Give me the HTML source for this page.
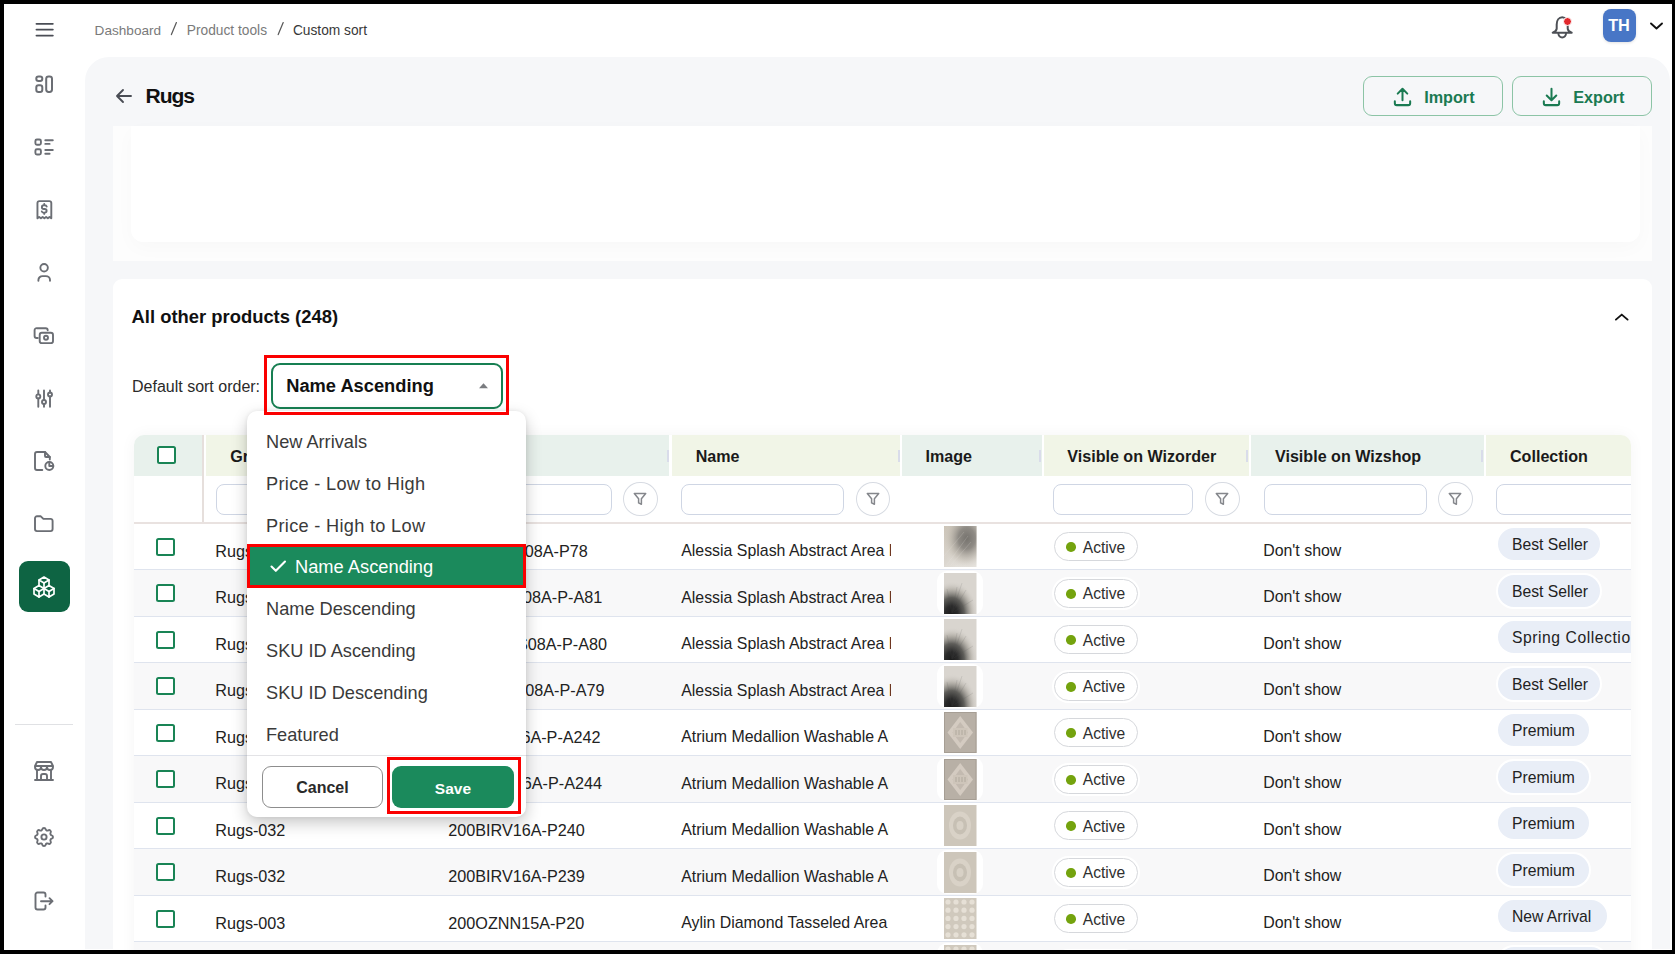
<!DOCTYPE html>
<html><head><meta charset="utf-8"><title>Custom sort</title><style>
*{box-sizing:border-box;margin:0;padding:0}
html,body{width:1675px;height:954px;overflow:hidden;background:#fff}
body{font-family:"Liberation Sans",sans-serif;color:#222;position:relative}
.t{position:absolute;white-space:nowrap;line-height:1}
.s{position:absolute;overflow:visible}
.b{position:absolute}
.frame{position:absolute;background:#000;z-index:100}
</style></head><body>
<div class="b" style="left:85px;top:57px;width:1585px;height:892px;background:#f6f7f9;border-radius:24px 24px 0 0"></div>
<svg class="s" style="left:34px;top:18px;" width="20" height="24" viewBox="0 0 20 24" fill="none" stroke="#4a4d55" stroke-width="1.9" stroke-linecap="round" stroke-linejoin="round"><path d="M2.5 5.85h16.3M2.5 11.6h16.3M2.5 17.6h16.3"/></svg>
<div class="t" style="left:94.6px;top:23.7px;font-size:13.6px;font-weight:400;color:#7a7a7a;">Dashboard</div>
<svg class="s" style="left:168px;top:20px;" width="12" height="17" viewBox="0 0 12 17" fill="none" stroke="#5a5a5a" stroke-width="1.25" stroke-linecap="round" stroke-linejoin="round"><path d="M8.4 2.6L3.4 14.6"/></svg>
<div class="t" style="left:186.8px;top:23.6px;font-size:13.75px;font-weight:400;color:#7a7a7a;">Product tools</div>
<svg class="s" style="left:275px;top:20px;" width="12" height="17" viewBox="0 0 12 17" fill="none" stroke="#5a5a5a" stroke-width="1.25" stroke-linecap="round" stroke-linejoin="round"><path d="M8.2 2.6L3.2 14.6"/></svg>
<div class="t" style="left:292.9px;top:23.6px;font-size:13.75px;font-weight:400;color:#383838;">Custom sort</div>
<svg class="s" style="left:1550px;top:15px;" width="24" height="26" viewBox="0 0 24 26" fill="none" stroke="#4d5056" stroke-width="2" stroke-linecap="round" stroke-linejoin="round"><path d="M12.2 2.3C8.9 2.3 6.7 5.5 6.7 9.5v4c0 2-1.6 3.3-4 4.2h19c-2.4-.9-4-2.2-4-4.2v-4c0-4-2.2-7.2-5.5-7.2z"/><path d="M8.4 18.6a3.8 3.8 0 0 0 7.6 0"/></svg>
<div class="b" style="left:1562.9px;top:17px;width:9px;height:9px;border-radius:50%;background:#e2282c;border:1.6px solid #fff"></div>
<div class="b" style="left:1603px;top:9px;width:32.5px;height:32.5px;border-radius:8px;background:#4876c6;box-shadow:0 1px 3px rgba(0,0,0,.12)"></div>
<div class="t" style="left:1608.3px;top:17.2px;font-size:16.3px;font-weight:700;color:#fff;letter-spacing:-0.3px">TH</div>
<svg class="s" style="left:1648px;top:19px;" width="17" height="13" viewBox="0 0 17 13" fill="none" stroke="#111" stroke-width="1.9" stroke-linecap="round" stroke-linejoin="round"><path d="M3 4.5l5.5 5l5.5-5"/></svg>
<svg class="s" style="left:32px;top:72px;" width="24" height="24" viewBox="0 0 24 24" fill="none" stroke="#6b6e74" stroke-width="2" stroke-linecap="round" stroke-linejoin="round"><rect x="4.3" y="4.4" width="6" height="4.6" rx="2.2"/><rect x="4.3" y="13.2" width="6" height="6.8" rx="2.2"/><rect x="14.2" y="4.4" width="5.8" height="15.6" rx="2.4"/></svg>
<svg class="s" style="left:32px;top:135px;" width="24" height="24" viewBox="0 0 24 24" fill="none" stroke="#6b6e74" stroke-width="1.9" stroke-linecap="round" stroke-linejoin="round"><rect x="3.4" y="4.5" width="5.5" height="5.2" rx="1.5"/><rect x="3.4" y="14.3" width="5.5" height="5.2" rx="1.5"/><path d="M13.3 5.2h7.5M13.3 8.9h4.3M13.3 15h7.5M13.3 18.8h4.3"/></svg>
<svg class="s" style="left:32px;top:198px;" width="24" height="24" viewBox="0 0 24 24" fill="none" stroke="#6b6e74" stroke-width="1.9" stroke-linecap="round" stroke-linejoin="round"><path d="M5.45 20.3V5.1a2 2 0 0 1 2-2h9.85a2 2 0 0 1 2 2v15.2l-1.73-1.4-1.73 1.4-1.73-1.4-1.73 1.4-1.73-1.4-1.73 1.4-1.73-1.4z"/><path d="M14.7 8.5a2 1.7 0 0 0-2-1.2h-.9a1.9 1.85 0 0 0 0 3.7h.9a1.9 1.85 0 0 1 0 3.7h-.9a2 1.7 0 0 1-2-1.2M12.25 6v1.3M12.25 14.7v1.2"/></svg>
<svg class="s" style="left:32px;top:260px;" width="24" height="24" viewBox="0 0 24 24" fill="none" stroke="#6b6e74" stroke-width="1.9" stroke-linecap="round" stroke-linejoin="round"><circle cx="12.1" cy="7.8" r="3.75"/><path d="M6.4 20.7v-.6a4.1 4 0 0 1 4.1-4h3.4a4.1 4 0 0 1 4.1 4v.6"/></svg>
<svg class="s" style="left:32px;top:324px;" width="24" height="24" viewBox="0 0 24 24" fill="none" stroke="#6b6e74" stroke-width="1.9" stroke-linecap="round" stroke-linejoin="round"><path d="M15.7 6.2a2 2 0 0 0-2-2H5a2 2 0 0 0-2.4 2v5.8a2 2 0 0 0 2 2h1.2"/><rect x="7.7" y="8.8" width="13.3" height="10.3" rx="2.2"/><circle cx="14" cy="13.8" r="2"/></svg>
<svg class="s" style="left:32px;top:386px;" width="24" height="24" viewBox="0 0 24 24" fill="none" stroke="#6b6e74" stroke-width="1.9" stroke-linecap="round" stroke-linejoin="round"><path d="M6.3 4.5v3.8M6.3 12.5v8.2M12 4.5v9.4M12 18v2.7M18 4.5v2.2M18 10.5v10.2"/><circle cx="6.3" cy="10.4" r="2"/><circle cx="12" cy="16" r="2"/><circle cx="18" cy="8.5" r="2"/></svg>
<svg class="s" style="left:32px;top:449px;" width="24" height="24" viewBox="0 0 24 24" fill="none" stroke="#6b6e74" stroke-width="1.9" stroke-linecap="round" stroke-linejoin="round"><path d="M10.3 21H5a2 2 0 0 1-2-2V5a2 2 0 0 1 2-2h8l4.8 5v2.6"/><path d="M13 3v4a1 1 0 0 0 1 1h3.8"/><circle cx="17.3" cy="17" r="4"/><path d="M17.3 13v4h4"/></svg>
<svg class="s" style="left:32px;top:511px;" width="24" height="24" viewBox="0 0 24 24" fill="none" stroke="#6b6e74" stroke-width="1.9" stroke-linecap="round" stroke-linejoin="round"><path d="M5 5.3h3.8l2.6 2.6h7.2a2 2 0 0 1 2 2v8.2a2 2 0 0 1-2 2H5a2 2 0 0 1-2-2V7.3a2 2 0 0 1 2-2"/></svg>
<div class="b" style="left:18.7px;top:561px;width:51px;height:51px;border-radius:9px;background:#0e6443"></div>
<svg class="s" style="left:32.3px;top:575px;" width="24" height="24" viewBox="0 0 24 24" fill="none" stroke="#fff" stroke-width="1.7" stroke-linecap="round" stroke-linejoin="round"><path d="M7 16.5l-5-3 5-3 5 3v5.5l-5 3z"/><path d="M2 13.5v5.5l5 3M7 16.5l5-3"/><path d="M17 16.5l-5-3 5-3 5 3v5.5l-5 3z"/><path d="M12 19l5 3M17 16.5l5-3"/><path d="M12 13.5V8L7 5l5-3 5 3v5.5"/><path d="M7 5.03v5.45M12 8l5-3"/></svg>
<div class="b" style="left:15px;top:723.5px;width:58px;height:1.2px;background:#e0e1e4"></div>
<svg class="s" style="left:32px;top:759px;" width="24" height="24" viewBox="0 0 24 24" fill="none" stroke="#6b6e74" stroke-width="1.9" stroke-linecap="round" stroke-linejoin="round"><path d="M3 21h18"/><path d="M3 7v1a3 3 0 0 0 6 0V7m0 1a3 3 0 0 0 6 0V7m0 1a3 3 0 0 0 6 0V7H3l2-4h14l2 4"/><path d="M5 21V10.85M19 21V10.85M9 21v-4a2 2 0 0 1 2-2h2a2 2 0 0 1 2 2v4"/></svg>
<svg class="s" style="left:32px;top:825px;" width="24" height="24" viewBox="0 0 24 24" fill="none" stroke="#6b6e74" stroke-width="1.9" stroke-linecap="round" stroke-linejoin="round"><path d="M10.325 4.317c.426-1.756 2.924-1.756 3.35 0a1.724 1.724 0 0 0 2.573 1.066c1.543-.94 3.31.826 2.37 2.37a1.724 1.724 0 0 0 1.065 2.572c1.756.426 1.756 2.924 0 3.35a1.724 1.724 0 0 0-1.066 2.573c.94 1.543-.826 3.31-2.37 2.37a1.724 1.724 0 0 0-2.572 1.065c-.426 1.756-2.924 1.756-3.35 0a1.724 1.724 0 0 0-2.573-1.066c-1.543.94-3.31-.826-2.37-2.37a1.724 1.724 0 0 0-1.065-2.572c-1.756-.426-1.756-2.924 0-3.35a1.724 1.724 0 0 0 1.066-2.573c-.94-1.543.826-3.31 2.37-2.37c1 .608 2.296.07 2.572-1.065z"/><circle cx="12" cy="12" r="2.6"/></svg>
<svg class="s" style="left:32px;top:889px;" width="24" height="24" viewBox="0 0 24 24" fill="none" stroke="#6b6e74" stroke-width="1.9" stroke-linecap="round" stroke-linejoin="round"><path d="M13.5 7.5v-2a2 2 0 0 0-2-2h-6a2 2 0 0 0-2 2v13a2 2 0 0 0 2 2h6a2 2 0 0 0 2-2v-2"/><path d="M9 12.2h11.5l-3-3M17.5 15.2l3-3"/></svg>
<svg class="s" style="left:112.3px;top:83.7px;" width="24" height="24" viewBox="0 0 24 24" fill="none" stroke="#4a4d55" stroke-width="1.9" stroke-linecap="round" stroke-linejoin="round"><path d="M5 12h14M5 12l6 6M5 12l6-6"/></svg>
<div class="t" style="left:145.6px;top:85.3px;font-size:21.1px;font-weight:700;color:#111;letter-spacing:-1.1px">Rugs</div>
<div class="b" style="left:1363px;top:76px;width:140px;height:40px;border:1.3px solid #8cc4a6;border-radius:9px"></div>
<svg class="s" style="left:1390.5px;top:84.5px;" width="23" height="23" viewBox="0 0 24 24" fill="none" stroke="#1a7a52" stroke-width="2.1" stroke-linecap="round" stroke-linejoin="round"><path d="M4 17v2a2 2 0 0 0 2 2h12a2 2 0 0 0 2-2v-2M7 9l5-5 5 5M12 4v12"/></svg>
<div class="t" style="left:1424.2px;top:89.1px;font-size:16.2px;font-weight:700;color:#1a7a52;">Import</div>
<div class="b" style="left:1512px;top:76px;width:140px;height:40px;border:1.3px solid #8cc4a6;border-radius:9px"></div>
<svg class="s" style="left:1539.5px;top:84.5px;" width="23" height="23" viewBox="0 0 24 24" fill="none" stroke="#1a7a52" stroke-width="2.1" stroke-linecap="round" stroke-linejoin="round"><path d="M4 17v2a2 2 0 0 0 2 2h12a2 2 0 0 0 2-2v-2M7 11l5 5 5-5M12 4v12"/></svg>
<div class="t" style="left:1573.2px;top:89.1px;font-size:16.2px;font-weight:700;color:#1a7a52;">Export</div>
<div class="b" style="left:113px;top:125.5px;width:1539px;height:135px;background:#fdfdfd"></div>
<div class="b" style="left:131px;top:125.5px;width:1509px;height:116px;background:#fff;border-radius:0 0 12px 12px;box-shadow:0 6px 20px rgba(0,0,0,.025)"></div>
<div class="b" style="left:113px;top:279px;width:1539px;height:700px;background:#fff;border-radius:9px"></div>
<div class="t" style="left:131.6px;top:307.8px;font-size:18.4px;font-weight:700;color:#111;">All other products (248)</div>
<svg class="s" style="left:1610px;top:305px;" width="24" height="22" viewBox="0 0 24 22" fill="none" stroke="#111" stroke-width="1.9" stroke-linecap="round" stroke-linejoin="round"><path d="M5.9 14.6l5.85-5 5.85 5"/></svg>
<div class="t" style="left:132.0px;top:378.8px;font-size:16px;font-weight:400;color:#2a2a2a;">Default sort order:</div>
<div class="b" style="left:133.8px;top:435px;width:1496.8px;height:540px;background:#fff;border-radius:10px 10px 0 0;box-shadow:0 0 16px rgba(0,0,0,.045)"></div>
<div class="b" style="left:133.8px;top:435.0px;width:68.4px;height:41.0px;background:#e8f1ec;border-radius:10px 0 0 0"></div>
<div class="b" style="left:206.0px;top:435.0px;width:230.2px;height:41.0px;background:#f1f5e7;border-radius:0"></div>
<div class="t" style="left:230.2px;top:448.4px;font-size:16.1px;font-weight:700;color:#1a1a1a;">Group</div>
<div class="b" style="left:433.8px;top:449.8px;width:2.2px;height:12px;background:#d9dcea"></div>
<div class="b" style="left:438.5px;top:435.0px;width:230.7px;height:41.0px;background:#e8f1ec;border-radius:0"></div>
<div class="t" style="left:462.5px;top:448.4px;font-size:16.1px;font-weight:700;color:#1a1a1a;">SKU ID</div>
<div class="b" style="left:666.8px;top:449.8px;width:2.2px;height:12px;background:#d9dcea"></div>
<div class="b" style="left:671.5px;top:435.0px;width:228.4px;height:41.0px;background:#f1f5e7;border-radius:0"></div>
<div class="t" style="left:695.7px;top:448.4px;font-size:16.1px;font-weight:700;color:#1a1a1a;">Name</div>
<div class="b" style="left:897.5px;top:449.8px;width:2.2px;height:12px;background:#d9dcea"></div>
<div class="b" style="left:902.0px;top:435.0px;width:139.6px;height:41.0px;background:#e8f1ec;border-radius:0"></div>
<div class="t" style="left:925.5px;top:448.4px;font-size:16.1px;font-weight:700;color:#1a1a1a;">Image</div>
<div class="b" style="left:1039.2px;top:449.8px;width:2.2px;height:12px;background:#d9dcea"></div>
<div class="b" style="left:1043.9px;top:435.0px;width:204.7px;height:41.0px;background:#f1f5e7;border-radius:0"></div>
<div class="t" style="left:1067.3px;top:448.4px;font-size:16.1px;font-weight:700;color:#1a1a1a;">Visible on Wizorder</div>
<div class="b" style="left:1246.2px;top:449.8px;width:2.2px;height:12px;background:#d9dcea"></div>
<div class="b" style="left:1251.1px;top:435.0px;width:232.5px;height:41.0px;background:#e8f1ec;border-radius:0"></div>
<div class="t" style="left:1275.0px;top:448.4px;font-size:16.1px;font-weight:700;color:#1a1a1a;">Visible on Wizshop</div>
<div class="b" style="left:1481.2px;top:449.8px;width:2.2px;height:12px;background:#d9dcea"></div>
<div class="b" style="left:1486.2px;top:435.0px;width:144.4px;height:41.0px;background:#f1f5e7;border-radius:0 10px 0 0"></div>
<div class="t" style="left:1510.0px;top:448.4px;font-size:16.1px;font-weight:700;color:#1a1a1a;">Collection</div>
<div class="b" style="left:157.4px;top:446.1px;width:18.3px;height:18.4px;border:2.4px solid #198455;border-radius:2.5px;background:#fff"></div>
<div class="b" style="left:202.3px;top:435px;width:1.8px;height:87.5px;background:#e6dfdc"></div>
<div class="b" style="left:133.8px;top:521.9px;width:1496.8px;height:1.7px;background:#e9e2e0"></div>
<div class="b" style="left:215.6px;top:483.8px;width:164.4px;height:31.2px;border:1.3px solid #cfd6e4;border-radius:8px;background:#fff"></div>
<div class="b" style="left:390.0px;top:481.7px;width:34.6px;height:34.8px;border:1.3px solid #d7dbe2;border-radius:50%;background:#fff"></div>
<svg class="s" style="left:399.3px;top:491.2px;" width="16" height="16" viewBox="0 0 16 16" fill="none" stroke="#85878c" stroke-width="1.5" stroke-linecap="round" stroke-linejoin="round"><path d="M2.3 2.6h11.4l-4.3 5.2v5.4l-2.8-1.3v-4.1z"/></svg>
<div class="b" style="left:448.3px;top:483.8px;width:163.6px;height:31.2px;border:1.3px solid #cfd6e4;border-radius:8px;background:#fff"></div>
<div class="b" style="left:623.0px;top:481.7px;width:34.6px;height:34.8px;border:1.3px solid #d7dbe2;border-radius:50%;background:#fff"></div>
<svg class="s" style="left:632.3px;top:491.2px;" width="16" height="16" viewBox="0 0 16 16" fill="none" stroke="#85878c" stroke-width="1.5" stroke-linecap="round" stroke-linejoin="round"><path d="M2.3 2.6h11.4l-4.3 5.2v5.4l-2.8-1.3v-4.1z"/></svg>
<div class="b" style="left:681.2px;top:483.8px;width:162.8px;height:31.2px;border:1.3px solid #cfd6e4;border-radius:8px;background:#fff"></div>
<div class="b" style="left:855.9px;top:481.7px;width:34.6px;height:34.8px;border:1.3px solid #d7dbe2;border-radius:50%;background:#fff"></div>
<svg class="s" style="left:865.1999999999999px;top:491.2px;" width="16" height="16" viewBox="0 0 16 16" fill="none" stroke="#85878c" stroke-width="1.5" stroke-linecap="round" stroke-linejoin="round"><path d="M2.3 2.6h11.4l-4.3 5.2v5.4l-2.8-1.3v-4.1z"/></svg>
<div class="b" style="left:1053.3px;top:483.8px;width:140.2px;height:31.2px;border:1.3px solid #cfd6e4;border-radius:8px;background:#fff"></div>
<div class="b" style="left:1205.0px;top:481.7px;width:34.6px;height:34.8px;border:1.3px solid #d7dbe2;border-radius:50%;background:#fff"></div>
<svg class="s" style="left:1214.3px;top:491.2px;" width="16" height="16" viewBox="0 0 16 16" fill="none" stroke="#85878c" stroke-width="1.5" stroke-linecap="round" stroke-linejoin="round"><path d="M2.3 2.6h11.4l-4.3 5.2v5.4l-2.8-1.3v-4.1z"/></svg>
<div class="b" style="left:1263.7px;top:483.8px;width:163.0px;height:31.2px;border:1.3px solid #cfd6e4;border-radius:8px;background:#fff"></div>
<div class="b" style="left:1438.0px;top:481.7px;width:34.6px;height:34.8px;border:1.3px solid #d7dbe2;border-radius:50%;background:#fff"></div>
<svg class="s" style="left:1447.3px;top:491.2px;" width="16" height="16" viewBox="0 0 16 16" fill="none" stroke="#85878c" stroke-width="1.5" stroke-linecap="round" stroke-linejoin="round"><path d="M2.3 2.6h11.4l-4.3 5.2v5.4l-2.8-1.3v-4.1z"/></svg>
<div class="b" style="left:1496px;top:483.8px;width:134.6px;height:31.2px;overflow:hidden"><div class="b" style="left:0;top:0;width:160px;height:31.2px;border:1.3px solid #cfd6e4;border-radius:8px;background:#fff"></div></div>
<div class="b" style="left:133.8px;top:523.60px;width:1496.8px;height:46.5px;background:#fff;border-bottom:1.3px solid #dfe4ee"></div>
<div class="b" style="left:156px;top:537.50px;width:18.6px;height:18.4px;border:2.4px solid #198455;border-radius:2.5px;background:#fff"></div>
<div class="t" style="left:215.2px;top:542.7px;font-size:16.2px;font-weight:400;color:#222;">Rugs-021</div>
<div class="t" style="right:1087.3px;top:542.7px;font-size:16.2px">200ALSS08A-P78</div>
<div class="b" style="left:681.2px;top:523.60px;width:210px;height:46.5px;overflow:hidden"><div class="t" style="left:0.0px;top:19.7px;font-size:15.9px;font-weight:400;color:#222;">Alessia Splash Abstract Area Rug</div>
</div>
<div class="b" style="left:944px;top:526.20px;width:32.5px;height:41.5px;overflow:hidden"><svg width="32.5" height="41" viewBox="0 0 32.5 41" style="display:block"><defs><radialGradient id="g0" cx="0.7" cy="0.3" r="0.75"><stop offset="0" stop-color="#76736e"/><stop offset="0.35" stop-color="#8f8b85"/><stop offset="0.7" stop-color="#bdb7ad" stop-opacity=".6"/><stop offset="1" stop-color="#d9d4cb" stop-opacity="0"/></radialGradient><linearGradient id="h0" x1="0" y1="0" x2="0.6" y2="1"><stop offset="0" stop-color="#cbc3b6"/><stop offset="0.6" stop-color="#d9d4cc"/><stop offset="1" stop-color="#e6e3de"/></linearGradient></defs><rect width="32.5" height="41" fill="url(#h0)"/><rect width="32.5" height="41" fill="url(#g0)"/><path d="M2 40L24 10M6 40L27 16M0 30L20 6" stroke="#eeebe5" stroke-width="0.6" opacity=".3"/></svg></div>
<div class="b" style="left:1053.6px;top:532.40px;width:84.5px;height:29px;border:1.3px solid #d6d8dc;border-radius:15px;background:#fff"></div>
<div class="b" style="left:1066px;top:542.40px;width:9.7px;height:9.7px;border-radius:50%;background:#74a30e"></div>
<div class="t" style="left:1082.8px;top:539.6px;font-size:15.6px;font-weight:400;color:#2f2f2f;">Active</div>
<div class="t" style="left:1263.2px;top:542.5px;font-size:15.9px;font-weight:400;color:#222;">Don't show</div>
<div class="b" style="left:1496px;top:525.20px;width:134.6px;height:39px;overflow:hidden"><div class="b" style="left:2px;top:3px;width:102.3px;height:32.2px;border-radius:16px;background:#e9eef7"></div></div>
<div class="b" style="left:1498px;top:523.60px;width:132.6px;height:46.5px;overflow:hidden"><div class="t" style="left:14.0px;top:13.6px;font-size:15.7px;font-weight:400;color:#222;">Best Seller</div>
</div>
<div class="b" style="left:133.8px;top:570.10px;width:1496.8px;height:46.5px;background:#f8f8f9;border-bottom:1.3px solid #dfe4ee"></div>
<div class="b" style="left:156px;top:584.00px;width:18.6px;height:18.4px;border:2.4px solid #198455;border-radius:2.5px;background:#fff"></div>
<div class="t" style="left:215.2px;top:589.2px;font-size:16.2px;font-weight:400;color:#222;">Rugs-021</div>
<div class="t" style="right:1072.8px;top:589.2px;font-size:16.2px">200ALSS08A-P-A81</div>
<div class="b" style="left:681.2px;top:570.10px;width:210px;height:46.5px;overflow:hidden"><div class="t" style="left:0.0px;top:19.7px;font-size:15.9px;font-weight:400;color:#222;">Alessia Splash Abstract Area Rug</div>
</div>
<div class="b" style="left:937px;top:571.10px;width:46px;height:43.5px;background:#fff;border-radius:10px"></div>
<div class="b" style="left:944px;top:572.70px;width:32.5px;height:41.5px;overflow:hidden"><svg width="32.5" height="41" viewBox="0 0 32.5 41" style="display:block"><defs><radialGradient id="g1" cx="0.25" cy="0.98" r="0.78" fx="0.22" fy="1"><stop offset="0" stop-color="#1c1c1c"/><stop offset="0.25" stop-color="#2b2b2b"/><stop offset="0.5" stop-color="#5f5e5a"/><stop offset="0.75" stop-color="#aba79f" stop-opacity=".7"/><stop offset="1" stop-color="#d6d2cc" stop-opacity="0"/></radialGradient></defs><rect width="32.5" height="41" fill="#d9d5cf"/><rect width="32.5" height="41" fill="url(#g1)"/><path d="M8 40L13 14M8 40L22 17M8 40L3 16M8 40L29 27M8 40L18 10" stroke="#555" stroke-width="0.6" opacity=".22"/></svg></div>
<div class="b" style="left:1053.6px;top:578.90px;width:84.5px;height:29px;border:1.3px solid #d6d8dc;border-radius:15px;background:#fff;box-shadow:0 0 0 2px #fff"></div>
<div class="b" style="left:1066px;top:588.90px;width:9.7px;height:9.7px;border-radius:50%;background:#74a30e"></div>
<div class="t" style="left:1082.8px;top:586.1px;font-size:15.6px;font-weight:400;color:#2f2f2f;">Active</div>
<div class="t" style="left:1263.2px;top:589.0px;font-size:15.9px;font-weight:400;color:#222;">Don't show</div>
<div class="b" style="left:1496px;top:571.70px;width:134.6px;height:39px;overflow:hidden"><div class="b" style="left:2px;top:3px;width:102.3px;height:32.2px;border-radius:16px;background:#e9eef7;box-shadow:0 0 0 2px #fff"></div></div>
<div class="b" style="left:1498px;top:570.10px;width:132.6px;height:46.5px;overflow:hidden"><div class="t" style="left:14.0px;top:13.6px;font-size:15.7px;font-weight:400;color:#222;">Best Seller</div>
</div>
<div class="b" style="left:133.8px;top:616.60px;width:1496.8px;height:46.5px;background:#fff;border-bottom:1.3px solid #dfe4ee"></div>
<div class="b" style="left:156px;top:630.50px;width:18.6px;height:18.4px;border:2.4px solid #198455;border-radius:2.5px;background:#fff"></div>
<div class="t" style="left:215.2px;top:635.7px;font-size:16.2px;font-weight:400;color:#222;">Rugs-021</div>
<div class="t" style="right:1068.0px;top:635.7px;font-size:16.2px">200ALSS08A-P-A80</div>
<div class="b" style="left:681.2px;top:616.60px;width:210px;height:46.5px;overflow:hidden"><div class="t" style="left:0.0px;top:19.7px;font-size:15.9px;font-weight:400;color:#222;">Alessia Splash Abstract Area Rug</div>
</div>
<div class="b" style="left:944px;top:619.20px;width:32.5px;height:41.5px;overflow:hidden"><svg width="32.5" height="41" viewBox="0 0 32.5 41" style="display:block"><defs><radialGradient id="g2" cx="0.25" cy="0.98" r="0.78" fx="0.22" fy="1"><stop offset="0" stop-color="#1c1c1c"/><stop offset="0.25" stop-color="#2b2b2b"/><stop offset="0.5" stop-color="#5f5e5a"/><stop offset="0.75" stop-color="#aba79f" stop-opacity=".7"/><stop offset="1" stop-color="#d6d2cc" stop-opacity="0"/></radialGradient></defs><rect width="32.5" height="41" fill="#d9d5cf"/><rect width="32.5" height="41" fill="url(#g2)"/><path d="M8 40L13 14M8 40L22 17M8 40L3 16M8 40L29 27M8 40L18 10" stroke="#555" stroke-width="0.6" opacity=".22"/></svg></div>
<div class="b" style="left:1053.6px;top:625.40px;width:84.5px;height:29px;border:1.3px solid #d6d8dc;border-radius:15px;background:#fff"></div>
<div class="b" style="left:1066px;top:635.40px;width:9.7px;height:9.7px;border-radius:50%;background:#74a30e"></div>
<div class="t" style="left:1082.8px;top:632.6px;font-size:15.6px;font-weight:400;color:#2f2f2f;">Active</div>
<div class="t" style="left:1263.2px;top:635.5px;font-size:15.9px;font-weight:400;color:#222;">Don't show</div>
<div class="b" style="left:1496px;top:618.20px;width:134.6px;height:39px;overflow:hidden"><div class="b" style="left:2px;top:3px;width:150px;height:32.2px;border-radius:16px;background:#e9eef7"></div></div>
<div class="b" style="left:1498px;top:616.60px;width:132.6px;height:46.5px;overflow:hidden"><div class="t" style="left:14.0px;top:13.6px;font-size:15.7px;font-weight:400;color:#222;letter-spacing:0.55px">Spring Collection</div>
</div>
<div class="b" style="left:133.8px;top:663.10px;width:1496.8px;height:46.5px;background:#f8f8f9;border-bottom:1.3px solid #dfe4ee"></div>
<div class="b" style="left:156px;top:677.00px;width:18.6px;height:18.4px;border:2.4px solid #198455;border-radius:2.5px;background:#fff"></div>
<div class="t" style="left:215.2px;top:682.2px;font-size:16.2px;font-weight:400;color:#222;">Rugs-021</div>
<div class="t" style="right:1070.5px;top:682.2px;font-size:16.2px">200ALSS08A-P-A79</div>
<div class="b" style="left:681.2px;top:663.10px;width:210px;height:46.5px;overflow:hidden"><div class="t" style="left:0.0px;top:19.7px;font-size:15.9px;font-weight:400;color:#222;">Alessia Splash Abstract Area Rug</div>
</div>
<div class="b" style="left:937px;top:664.10px;width:46px;height:43.5px;background:#fff;border-radius:10px"></div>
<div class="b" style="left:944px;top:665.70px;width:32.5px;height:41.5px;overflow:hidden"><svg width="32.5" height="41" viewBox="0 0 32.5 41" style="display:block"><defs><radialGradient id="g3" cx="0.25" cy="0.98" r="0.78" fx="0.22" fy="1"><stop offset="0" stop-color="#1c1c1c"/><stop offset="0.25" stop-color="#2b2b2b"/><stop offset="0.5" stop-color="#5f5e5a"/><stop offset="0.75" stop-color="#aba79f" stop-opacity=".7"/><stop offset="1" stop-color="#d6d2cc" stop-opacity="0"/></radialGradient></defs><rect width="32.5" height="41" fill="#d9d5cf"/><rect width="32.5" height="41" fill="url(#g3)"/><path d="M8 40L13 14M8 40L22 17M8 40L3 16M8 40L29 27M8 40L18 10" stroke="#555" stroke-width="0.6" opacity=".22"/></svg></div>
<div class="b" style="left:1053.6px;top:671.90px;width:84.5px;height:29px;border:1.3px solid #d6d8dc;border-radius:15px;background:#fff;box-shadow:0 0 0 2px #fff"></div>
<div class="b" style="left:1066px;top:681.90px;width:9.7px;height:9.7px;border-radius:50%;background:#74a30e"></div>
<div class="t" style="left:1082.8px;top:679.1px;font-size:15.6px;font-weight:400;color:#2f2f2f;">Active</div>
<div class="t" style="left:1263.2px;top:682.0px;font-size:15.9px;font-weight:400;color:#222;">Don't show</div>
<div class="b" style="left:1496px;top:664.70px;width:134.6px;height:39px;overflow:hidden"><div class="b" style="left:2px;top:3px;width:102.3px;height:32.2px;border-radius:16px;background:#e9eef7;box-shadow:0 0 0 2px #fff"></div></div>
<div class="b" style="left:1498px;top:663.10px;width:132.6px;height:46.5px;overflow:hidden"><div class="t" style="left:14.0px;top:13.6px;font-size:15.7px;font-weight:400;color:#222;">Best Seller</div>
</div>
<div class="b" style="left:133.8px;top:709.60px;width:1496.8px;height:46.5px;background:#fff;border-bottom:1.3px solid #dfe4ee"></div>
<div class="b" style="left:156px;top:723.50px;width:18.6px;height:18.4px;border:2.4px solid #198455;border-radius:2.5px;background:#fff"></div>
<div class="t" style="left:215.2px;top:728.7px;font-size:16.2px;font-weight:400;color:#222;">Rugs-032</div>
<div class="t" style="right:1074.4px;top:728.7px;font-size:16.2px">200BIRV16A-P-A242</div>
<div class="b" style="left:681.2px;top:709.60px;width:208px;height:46.5px;overflow:hidden"><div class="t" style="left:0.0px;top:19.7px;font-size:15.9px;font-weight:400;color:#222;">Atrium Medallion Washable Area Rug</div>
</div>
<div class="b" style="left:944px;top:712.20px;width:32.5px;height:41.5px;overflow:hidden"><svg width="32.5" height="41" viewBox="0 0 32.5 41" style="display:block"><rect width="32.5" height="41" fill="#b8b0a6"/><path d="M16.2 4L29 20.5 16.2 37 3.5 20.5z" fill="#d4cbc1"/><path d="M16.2 10L24 20.5 16.2 31 8.5 20.5z" fill="#c3bab0"/><rect x="9" y="16" width="14.5" height="9" fill="#cec5ba"/><path d="M12 18v5M15 18v5M18 18v5M21 18v5" stroke="#aaa298" stroke-width="0.8"/><rect x="0.5" y="0.5" width="31.5" height="40" fill="none" stroke="#a69e94" stroke-width="1"/></svg></div>
<div class="b" style="left:1053.6px;top:718.40px;width:84.5px;height:29px;border:1.3px solid #d6d8dc;border-radius:15px;background:#fff"></div>
<div class="b" style="left:1066px;top:728.40px;width:9.7px;height:9.7px;border-radius:50%;background:#74a30e"></div>
<div class="t" style="left:1082.8px;top:725.6px;font-size:15.6px;font-weight:400;color:#2f2f2f;">Active</div>
<div class="t" style="left:1263.2px;top:728.5px;font-size:15.9px;font-weight:400;color:#222;">Don't show</div>
<div class="b" style="left:1496px;top:711.20px;width:134.6px;height:39px;overflow:hidden"><div class="b" style="left:2px;top:3px;width:90.7px;height:32.2px;border-radius:16px;background:#e9eef7"></div></div>
<div class="b" style="left:1498px;top:709.60px;width:132.6px;height:46.5px;overflow:hidden"><div class="t" style="left:14.0px;top:13.6px;font-size:15.7px;font-weight:400;color:#222;">Premium</div>
</div>
<div class="b" style="left:133.8px;top:756.10px;width:1496.8px;height:46.5px;background:#f8f8f9;border-bottom:1.3px solid #dfe4ee"></div>
<div class="b" style="left:156px;top:770.00px;width:18.6px;height:18.4px;border:2.4px solid #198455;border-radius:2.5px;background:#fff"></div>
<div class="t" style="left:215.2px;top:775.2px;font-size:16.2px;font-weight:400;color:#222;">Rugs-032</div>
<div class="t" style="right:1073.0px;top:775.2px;font-size:16.2px">200BIRV16A-P-A244</div>
<div class="b" style="left:681.2px;top:756.10px;width:208px;height:46.5px;overflow:hidden"><div class="t" style="left:0.0px;top:19.7px;font-size:15.9px;font-weight:400;color:#222;">Atrium Medallion Washable Area Rug</div>
</div>
<div class="b" style="left:937px;top:757.10px;width:46px;height:43.5px;background:#fff;border-radius:10px"></div>
<div class="b" style="left:944px;top:758.70px;width:32.5px;height:41.5px;overflow:hidden"><svg width="32.5" height="41" viewBox="0 0 32.5 41" style="display:block"><rect width="32.5" height="41" fill="#b8b0a6"/><path d="M16.2 4L29 20.5 16.2 37 3.5 20.5z" fill="#d4cbc1"/><path d="M16.2 10L24 20.5 16.2 31 8.5 20.5z" fill="#c3bab0"/><rect x="9" y="16" width="14.5" height="9" fill="#cec5ba"/><path d="M12 18v5M15 18v5M18 18v5M21 18v5" stroke="#aaa298" stroke-width="0.8"/><rect x="0.5" y="0.5" width="31.5" height="40" fill="none" stroke="#a69e94" stroke-width="1"/></svg></div>
<div class="b" style="left:1053.6px;top:764.90px;width:84.5px;height:29px;border:1.3px solid #d6d8dc;border-radius:15px;background:#fff;box-shadow:0 0 0 2px #fff"></div>
<div class="b" style="left:1066px;top:774.90px;width:9.7px;height:9.7px;border-radius:50%;background:#74a30e"></div>
<div class="t" style="left:1082.8px;top:772.1px;font-size:15.6px;font-weight:400;color:#2f2f2f;">Active</div>
<div class="t" style="left:1263.2px;top:775.0px;font-size:15.9px;font-weight:400;color:#222;">Don't show</div>
<div class="b" style="left:1496px;top:757.70px;width:134.6px;height:39px;overflow:hidden"><div class="b" style="left:2px;top:3px;width:90.7px;height:32.2px;border-radius:16px;background:#e9eef7;box-shadow:0 0 0 2px #fff"></div></div>
<div class="b" style="left:1498px;top:756.10px;width:132.6px;height:46.5px;overflow:hidden"><div class="t" style="left:14.0px;top:13.6px;font-size:15.7px;font-weight:400;color:#222;">Premium</div>
</div>
<div class="b" style="left:133.8px;top:802.60px;width:1496.8px;height:46.5px;background:#fff;border-bottom:1.3px solid #dfe4ee"></div>
<div class="b" style="left:156px;top:816.50px;width:18.6px;height:18.4px;border:2.4px solid #198455;border-radius:2.5px;background:#fff"></div>
<div class="t" style="left:215.2px;top:821.7px;font-size:16.2px;font-weight:400;color:#222;">Rugs-032</div>
<div class="t" style="left:448.3px;top:821.7px;font-size:16.2px;font-weight:400;color:#222;">200BIRV16A-P240</div>
<div class="b" style="left:681.2px;top:802.60px;width:208px;height:46.5px;overflow:hidden"><div class="t" style="left:0.0px;top:19.7px;font-size:15.9px;font-weight:400;color:#222;">Atrium Medallion Washable Area Rug</div>
</div>
<div class="b" style="left:944px;top:805.20px;width:32.5px;height:41.5px;overflow:hidden"><svg width="32.5" height="41" viewBox="0 0 32.5 41" style="display:block"><rect width="32.5" height="41" fill="#cdc6ba"/><ellipse cx="16" cy="20.5" rx="11" ry="14" fill="#d9d2c7"/><ellipse cx="16" cy="20.5" rx="7" ry="9" fill="#c7c0b4"/><ellipse cx="16" cy="20.5" rx="3.5" ry="4.5" fill="#d8d1c6"/></svg></div>
<div class="b" style="left:1053.6px;top:811.40px;width:84.5px;height:29px;border:1.3px solid #d6d8dc;border-radius:15px;background:#fff"></div>
<div class="b" style="left:1066px;top:821.40px;width:9.7px;height:9.7px;border-radius:50%;background:#74a30e"></div>
<div class="t" style="left:1082.8px;top:818.6px;font-size:15.6px;font-weight:400;color:#2f2f2f;">Active</div>
<div class="t" style="left:1263.2px;top:821.5px;font-size:15.9px;font-weight:400;color:#222;">Don't show</div>
<div class="b" style="left:1496px;top:804.20px;width:134.6px;height:39px;overflow:hidden"><div class="b" style="left:2px;top:3px;width:90.7px;height:32.2px;border-radius:16px;background:#e9eef7"></div></div>
<div class="b" style="left:1498px;top:802.60px;width:132.6px;height:46.5px;overflow:hidden"><div class="t" style="left:14.0px;top:13.6px;font-size:15.7px;font-weight:400;color:#222;">Premium</div>
</div>
<div class="b" style="left:133.8px;top:849.10px;width:1496.8px;height:46.5px;background:#f8f8f9;border-bottom:1.3px solid #dfe4ee"></div>
<div class="b" style="left:156px;top:863.00px;width:18.6px;height:18.4px;border:2.4px solid #198455;border-radius:2.5px;background:#fff"></div>
<div class="t" style="left:215.2px;top:868.2px;font-size:16.2px;font-weight:400;color:#222;">Rugs-032</div>
<div class="t" style="left:448.3px;top:868.2px;font-size:16.2px;font-weight:400;color:#222;">200BIRV16A-P239</div>
<div class="b" style="left:681.2px;top:849.10px;width:208px;height:46.5px;overflow:hidden"><div class="t" style="left:0.0px;top:19.7px;font-size:15.9px;font-weight:400;color:#222;">Atrium Medallion Washable Area Rug</div>
</div>
<div class="b" style="left:937px;top:850.10px;width:46px;height:43.5px;background:#fff;border-radius:10px"></div>
<div class="b" style="left:944px;top:851.70px;width:32.5px;height:41.5px;overflow:hidden"><svg width="32.5" height="41" viewBox="0 0 32.5 41" style="display:block"><rect width="32.5" height="41" fill="#cdc6ba"/><ellipse cx="16" cy="20.5" rx="11" ry="14" fill="#d9d2c7"/><ellipse cx="16" cy="20.5" rx="7" ry="9" fill="#c7c0b4"/><ellipse cx="16" cy="20.5" rx="3.5" ry="4.5" fill="#d8d1c6"/></svg></div>
<div class="b" style="left:1053.6px;top:857.90px;width:84.5px;height:29px;border:1.3px solid #d6d8dc;border-radius:15px;background:#fff;box-shadow:0 0 0 2px #fff"></div>
<div class="b" style="left:1066px;top:867.90px;width:9.7px;height:9.7px;border-radius:50%;background:#74a30e"></div>
<div class="t" style="left:1082.8px;top:865.1px;font-size:15.6px;font-weight:400;color:#2f2f2f;">Active</div>
<div class="t" style="left:1263.2px;top:868.0px;font-size:15.9px;font-weight:400;color:#222;">Don't show</div>
<div class="b" style="left:1496px;top:850.70px;width:134.6px;height:39px;overflow:hidden"><div class="b" style="left:2px;top:3px;width:90.7px;height:32.2px;border-radius:16px;background:#e9eef7;box-shadow:0 0 0 2px #fff"></div></div>
<div class="b" style="left:1498px;top:849.10px;width:132.6px;height:46.5px;overflow:hidden"><div class="t" style="left:14.0px;top:13.6px;font-size:15.7px;font-weight:400;color:#222;">Premium</div>
</div>
<div class="b" style="left:133.8px;top:895.60px;width:1496.8px;height:46.5px;background:#fff;border-bottom:1.3px solid #dfe4ee"></div>
<div class="b" style="left:156px;top:909.50px;width:18.6px;height:18.4px;border:2.4px solid #198455;border-radius:2.5px;background:#fff"></div>
<div class="t" style="left:215.2px;top:914.7px;font-size:16.2px;font-weight:400;color:#222;">Rugs-003</div>
<div class="t" style="left:448.3px;top:914.7px;font-size:16.2px;font-weight:400;color:#222;">200OZNN15A-P20</div>
<div class="b" style="left:681.2px;top:895.60px;width:210px;height:46.5px;overflow:hidden"><div class="t" style="left:0.0px;top:19.7px;font-size:15.9px;font-weight:400;color:#222;">Aylin Diamond Tasseled Area Rug</div>
</div>
<div class="b" style="left:944px;top:898.20px;width:32.5px;height:41.5px;overflow:hidden"><svg width="32.5" height="41" viewBox="0 0 32.5 41" style="display:block"><rect width="32.5" height="41" fill="#d0c9bd"/><circle cx="4" cy="4.0" r="2.6" fill="#e6e0d6"/><circle cx="12" cy="4.0" r="2.6" fill="#e6e0d6"/><circle cx="20" cy="4.0" r="2.6" fill="#e6e0d6"/><circle cx="28" cy="4.0" r="2.6" fill="#e6e0d6"/><circle cx="4" cy="12.2" r="2.6" fill="#e6e0d6"/><circle cx="12" cy="12.2" r="2.6" fill="#e6e0d6"/><circle cx="20" cy="12.2" r="2.6" fill="#e6e0d6"/><circle cx="28" cy="12.2" r="2.6" fill="#e6e0d6"/><circle cx="4" cy="20.4" r="2.6" fill="#e6e0d6"/><circle cx="12" cy="20.4" r="2.6" fill="#e6e0d6"/><circle cx="20" cy="20.4" r="2.6" fill="#e6e0d6"/><circle cx="28" cy="20.4" r="2.6" fill="#e6e0d6"/><circle cx="4" cy="28.599999999999998" r="2.6" fill="#e6e0d6"/><circle cx="12" cy="28.599999999999998" r="2.6" fill="#e6e0d6"/><circle cx="20" cy="28.599999999999998" r="2.6" fill="#e6e0d6"/><circle cx="28" cy="28.599999999999998" r="2.6" fill="#e6e0d6"/><circle cx="4" cy="36.8" r="2.6" fill="#e6e0d6"/><circle cx="12" cy="36.8" r="2.6" fill="#e6e0d6"/><circle cx="20" cy="36.8" r="2.6" fill="#e6e0d6"/><circle cx="28" cy="36.8" r="2.6" fill="#e6e0d6"/></svg></div>
<div class="b" style="left:1053.6px;top:904.40px;width:84.5px;height:29px;border:1.3px solid #d6d8dc;border-radius:15px;background:#fff"></div>
<div class="b" style="left:1066px;top:914.40px;width:9.7px;height:9.7px;border-radius:50%;background:#74a30e"></div>
<div class="t" style="left:1082.8px;top:911.6px;font-size:15.6px;font-weight:400;color:#2f2f2f;">Active</div>
<div class="t" style="left:1263.2px;top:914.5px;font-size:15.9px;font-weight:400;color:#222;">Don't show</div>
<div class="b" style="left:1496px;top:897.20px;width:134.6px;height:39px;overflow:hidden"><div class="b" style="left:2px;top:3px;width:108.7px;height:32.2px;border-radius:16px;background:#e9eef7"></div></div>
<div class="b" style="left:1498px;top:895.60px;width:132.6px;height:46.5px;overflow:hidden"><div class="t" style="left:14.0px;top:13.6px;font-size:15.7px;font-weight:400;color:#222;">New Arrival</div>
</div>
<div class="b" style="left:133.8px;top:942.10px;width:1496.8px;height:46.5px;background:#f8f8f9;border-bottom:1.3px solid #dfe4ee"></div>
<div class="b" style="left:156px;top:956.00px;width:18.6px;height:18.4px;border:2.4px solid #198455;border-radius:2.5px;background:#fff"></div>
<div class="t" style="left:215.2px;top:961.2px;font-size:16.2px;font-weight:400;color:#222;">Rugs-003</div>
<div class="t" style="left:448.3px;top:961.2px;font-size:16.2px;font-weight:400;color:#222;">200OZNN15A-P21</div>
<div class="b" style="left:681.2px;top:942.10px;width:210px;height:46.5px;overflow:hidden"><div class="t" style="left:0.0px;top:19.7px;font-size:15.9px;font-weight:400;color:#222;">Aylin Diamond Tasseled Area Rug</div>
</div>
<div class="b" style="left:937px;top:943.10px;width:46px;height:43.5px;background:#fff;border-radius:10px"></div>
<div class="b" style="left:944px;top:944.70px;width:32.5px;height:41.5px;overflow:hidden"><svg width="32.5" height="41" viewBox="0 0 32.5 41" style="display:block"><rect width="32.5" height="41" fill="#d0c9bd"/><circle cx="4" cy="4.0" r="2.6" fill="#e6e0d6"/><circle cx="12" cy="4.0" r="2.6" fill="#e6e0d6"/><circle cx="20" cy="4.0" r="2.6" fill="#e6e0d6"/><circle cx="28" cy="4.0" r="2.6" fill="#e6e0d6"/><circle cx="4" cy="12.2" r="2.6" fill="#e6e0d6"/><circle cx="12" cy="12.2" r="2.6" fill="#e6e0d6"/><circle cx="20" cy="12.2" r="2.6" fill="#e6e0d6"/><circle cx="28" cy="12.2" r="2.6" fill="#e6e0d6"/><circle cx="4" cy="20.4" r="2.6" fill="#e6e0d6"/><circle cx="12" cy="20.4" r="2.6" fill="#e6e0d6"/><circle cx="20" cy="20.4" r="2.6" fill="#e6e0d6"/><circle cx="28" cy="20.4" r="2.6" fill="#e6e0d6"/><circle cx="4" cy="28.599999999999998" r="2.6" fill="#e6e0d6"/><circle cx="12" cy="28.599999999999998" r="2.6" fill="#e6e0d6"/><circle cx="20" cy="28.599999999999998" r="2.6" fill="#e6e0d6"/><circle cx="28" cy="28.599999999999998" r="2.6" fill="#e6e0d6"/><circle cx="4" cy="36.8" r="2.6" fill="#e6e0d6"/><circle cx="12" cy="36.8" r="2.6" fill="#e6e0d6"/><circle cx="20" cy="36.8" r="2.6" fill="#e6e0d6"/><circle cx="28" cy="36.8" r="2.6" fill="#e6e0d6"/></svg></div>
<div class="b" style="left:1053.6px;top:950.90px;width:84.5px;height:29px;border:1.3px solid #d6d8dc;border-radius:15px;background:#fff;box-shadow:0 0 0 2px #fff"></div>
<div class="b" style="left:1066px;top:960.90px;width:9.7px;height:9.7px;border-radius:50%;background:#74a30e"></div>
<div class="t" style="left:1082.8px;top:958.1px;font-size:15.6px;font-weight:400;color:#2f2f2f;">Active</div>
<div class="t" style="left:1263.2px;top:961.0px;font-size:15.9px;font-weight:400;color:#222;">Don't show</div>
<div class="b" style="left:1496px;top:943.70px;width:134.6px;height:39px;overflow:hidden"><div class="b" style="left:2px;top:3px;width:108.7px;height:32.2px;border-radius:16px;background:#e9eef7;box-shadow:0 0 0 2px #fff"></div></div>
<div class="b" style="left:1498px;top:942.10px;width:132.6px;height:46.5px;overflow:hidden"><div class="t" style="left:14.0px;top:13.6px;font-size:15.7px;font-weight:400;color:#222;">New Arrival</div>
</div>
<div class="b" style="left:264px;top:355.2px;width:244.6px;height:59.6px;border:3.2px solid #fa0000;z-index:50"></div>
<div class="b" style="left:271.2px;top:362.7px;width:232px;height:46.3px;border:2.3px solid #177f52;border-radius:9px;background:#fff"></div>
<div class="t" style="left:286.2px;top:377.3px;font-size:18.3px;font-weight:700;color:#111;">Name Ascending</div>
<svg class="s" style="left:478px;top:382px" width="11" height="7" viewBox="0 0 11 7"><path d="M1 6.3L5.5 1.3 10 6.3z" fill="#7a7c80"/></svg>
<div class="b" style="left:247px;top:410.5px;width:279px;height:406px;background:#fff;border-radius:10px;box-shadow:0 6px 16px rgba(0,0,0,.22),0 0 4px rgba(0,0,0,.07)"></div>
<div class="t" style="left:266.0px;top:432.8px;font-size:18.2px;font-weight:400;color:#3a3a3a;">New Arrivals</div>
<div class="t" style="left:266.0px;top:474.7px;font-size:18.2px;font-weight:400;color:#3a3a3a;letter-spacing:0.3px">Price - Low to High</div>
<div class="t" style="left:266.0px;top:516.6px;font-size:18.2px;font-weight:400;color:#3a3a3a;letter-spacing:0.3px">Price - High to Low</div>
<div class="b" style="left:247.3px;top:544.2px;width:279.1px;height:43.8px;border:3px solid #fa0000;background:#1b8a5c;box-shadow:inset 0 0 0 0.5px #1b8a5c"></div>
<svg class="s" style="left:268px;top:558px;" width="20" height="16" viewBox="0 0 20 16" fill="none" stroke="#fff" stroke-width="2.1" stroke-linecap="round" stroke-linejoin="round"><path d="M3.5 8.6l4.3 4.2 9.2-9.3"/></svg>
<div class="t" style="left:295.0px;top:558.3px;font-size:18.3px;font-weight:400;color:#fff;">Name Ascending</div>
<div class="t" style="left:266.0px;top:600.4px;font-size:18.2px;font-weight:400;color:#3a3a3a;">Name Descending</div>
<div class="t" style="left:266.0px;top:642.3px;font-size:18.2px;font-weight:400;color:#3a3a3a;">SKU ID Ascending</div>
<div class="t" style="left:266.0px;top:684.2px;font-size:18.2px;font-weight:400;color:#3a3a3a;">SKU ID Descending</div>
<div class="t" style="left:266.0px;top:726.1px;font-size:18.2px;font-weight:400;color:#3a3a3a;">Featured</div>
<div class="b" style="left:247px;top:755px;width:279px;height:1.2px;background:#e3e3e6"></div>
<div class="b" style="left:262.2px;top:765.6px;width:120.5px;height:42px;border:1.2px solid #8d8d8d;border-radius:9px;background:#fff"></div>
<div class="t" style="left:262.2px;width:120.5px;text-align:center;top:780.2px;font-size:16px;font-weight:700;color:#2a2a2a">Cancel</div>
<div class="b" style="left:386.5px;top:757.3px;width:134.9px;height:56.7px;border:3px solid #fa0000"></div>
<div class="b" style="left:392.3px;top:765.6px;width:121.3px;height:42px;border-radius:9px;background:#1b8a5c"></div>
<div class="t" style="left:392.3px;width:121.3px;text-align:center;top:780.6px;font-size:15.5px;font-weight:700;color:#fff">Save</div>
<div class="frame" style="left:0;top:0;width:1675px;height:3.5px"></div>
<div class="frame" style="left:0;top:0;width:3.5px;height:954px"></div>
<div class="frame" style="left:1671.5px;top:0;width:3.5px;height:954px"></div>
<div class="frame" style="left:0;top:950.3px;width:1675px;height:3.7px"></div>
</body></html>
